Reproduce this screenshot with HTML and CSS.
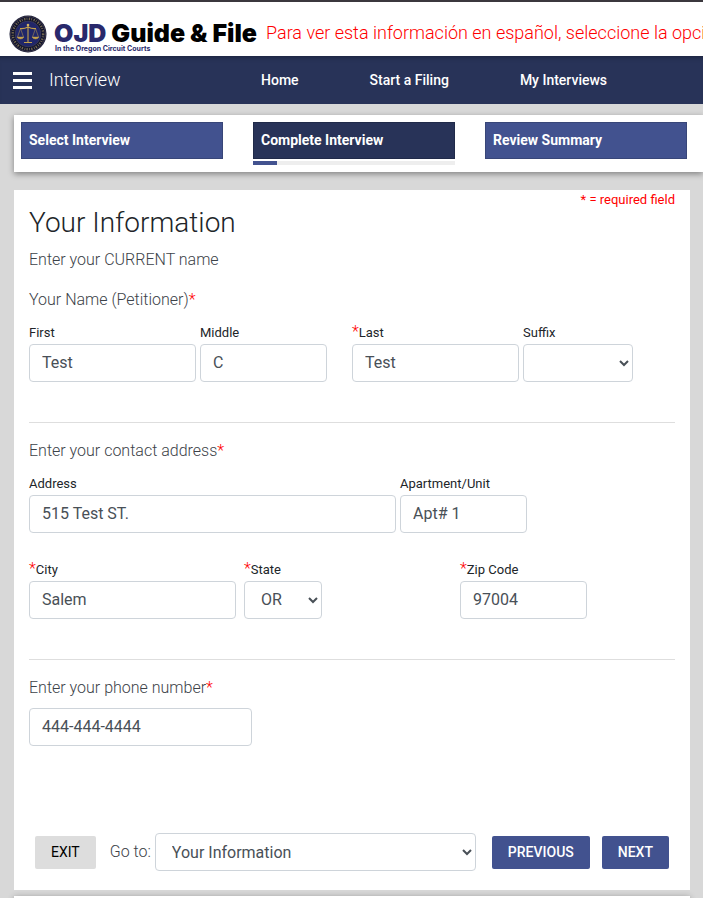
FILE: index.html
```html
<!DOCTYPE html>
<html lang="en">
<head>
<meta charset="utf-8">
<meta name="viewport" content="width=device-width, initial-scale=1">
<title>OJD Guide &amp; File</title>
<link rel="stylesheet" href="styles.css">
</head>
<body>
<header class="brand-bar">
  <svg class="seal" viewBox="0 0 38 38" aria-hidden="true">
    <circle cx="19" cy="19" r="18.5" fill="#11142f"/>
    <circle cx="19" cy="19" r="17.5" fill="none" stroke="#5a5360" stroke-width=".6"/>
    <circle cx="19" cy="19" r="15.2" fill="none" stroke="#75694f" stroke-width="2.4" stroke-dasharray="1.3 1.2 .8 1.5"/>
    <circle cx="19" cy="19" r="12.9" fill="#202669" stroke="#5d5557" stroke-width=".4"/>
    <g fill="none" stroke="#c4a14d" stroke-width="1.1">
      <path d="M19 9v18M11 13.500q4 .5 8-1.500q4 2 8 1.500M15 27.500h8"/>
      <path d="M11.500 13.500l-3 8.500M11.500 13.500l3 8.500M26.500 13.500l-3 8.500M26.500 13.500l3 8.500" stroke-width=".5"/>
      <path d="M8 22h7q-1 2-3.500 2T8 22zM23 22h7q-1 2-3.500 2T23 22z" fill="#c4a14d" stroke-width=".4"/>
    </g>
    <circle cx="19" cy="10" r="1.300" fill="#d4b461"/>
  </svg>
  <div class="wordmark">
    <div class="wordmark-name"><span class="wordmark-org">OJD</span> Guide &amp; File</div>
    <div class="wordmark-tag">In the Oregon Circuit Courts</div>
  </div>
  <p class="notice">Para ver esta información en español, seleccione la opción</p>
</header>
<nav class="nav">
  <button class="menu" type="button" aria-label="Menu"><svg viewBox="0 0 19 17" width="19" height="17"><path fill="#fff" d="M0 0h19v3H0zM0 7h19v3H0zM0 14h19v3H0z"/></svg></button>
  <span class="nav-title">Interview</span>
  <div class="nav-links">
    <a href="#">Home</a>
    <a href="#">Start a Filing</a>
    <a href="#">My Interviews</a>
  </div>
</nav>
<div class="steps">
  <div class="step"><a class="step-link" href="#">Select Interview</a></div>
  <div class="step"><a class="step-link current" href="#">Complete Interview</a><div class="progress"><div class="progress-fill"></div></div></div>
  <div class="step"><a class="step-link" href="#">Review Summary</a></div>
</div>
<main>
<form class="card">
  <p class="required-note">* = required field</p>
  <h1>Your Information</h1>
  <p class="prompt intro">Enter your CURRENT name</p>
  <section class="block">
    <p class="prompt">Your Name (Petitioner)<span class="star">*</span></p>
    <div class="fields">
      <div class="field w-name"><label for="first">First</label><input id="first" type="text" value="Test"></div>
      <div class="field w-short"><label for="middle">Middle</label><input id="middle" type="text" value="C"></div>
      <div class="field w-name gap-large"><label for="last"><span class="star">*</span>Last</label><input id="last" type="text" value="Test"></div>
      <div class="field w-suffix"><label for="suffix">Suffix</label><select id="suffix"><option></option></select></div>
    </div>
  </section>
  <section class="block">
    <p class="prompt">Enter your contact address<span class="star">*</span></p>
    <div class="fields">
      <div class="field w-address"><label for="address">Address</label><input id="address" type="text" value="515 Test ST."></div>
      <div class="field w-short"><label for="unit">Apartment/Unit</label><input id="unit" type="text" value="Apt# 1"></div>
    </div>
    <div class="fields">
      <div class="field w-city"><label for="city"><span class="star">*</span>City</label><input id="city" type="text" value="Salem"></div>
      <div class="field w-state"><label for="state"><span class="star">*</span>State</label><select id="state"><option>OR</option></select></div>
      <div class="field w-short"><label for="zip"><span class="star">*</span>Zip Code</label><input id="zip" type="text" value="97004"></div>
    </div>
  </section>
  <section class="block">
    <label class="prompt" for="phone">Enter your phone number<span class="star">*</span></label>
    <div class="fields"><div class="field w-phone"><input id="phone" type="tel" value="444-444-4444"></div></div>
  </section>
  <footer class="actions">
    <button class="btn btn-plain" type="button">EXIT</button>
    <label class="goto-label" for="goto">Go to:</label>
    <select class="goto" id="goto"><option>Your Information</option></select>
    <button class="btn" type="button">PREVIOUS</button>
    <button class="btn" type="button">NEXT</button>
  </footer>
</form>
<div class="card-next"></div>
</main>
</body>
</html>
```
FILE: styles.css
```css
* { box-sizing: border-box; }

body {
  margin: 0;
  background: #d8d8d8;
  color: #212529;
  font: 300 16px/24px Roboto, "Liberation Sans", sans-serif;
  overflow: hidden;
}

p, h1 { margin: 0; }
a { color: inherit; text-decoration: none; }

.brand-bar {
  display: flex;
  align-items: flex-start;
  height: 56px;
  padding: 13px 0 0 9px;
  border-top: 2px solid #3b383e;
  background: #fff;
  white-space: nowrap;
  overflow: hidden;
}

.seal { flex: none; width: 38px; height: 38px; }

.wordmark {
  flex: none;
  width: 211px;
  padding: 7px 0 0 7px;
}

.wordmark-name {
  color: #000;
  font: 900 25px/23px Inter, "Liberation Sans", sans-serif;
}

.wordmark-org { color: #29296c; }
.wordmark-tag { padding-left: 1px; color: #29296c; font: 700 7px/8px Inter, "Liberation Sans", sans-serif; }

.notice { padding: 6px 0 0 8px; color: #f00; font-size: 18px; font-weight: 300; }

.nav {
  display: flex;
  align-items: center;
  height: 48px;
  padding-left: 13px;
  background: #283358;
  box-shadow: inset 0 5px 5px -4px rgba(0, 0, 0, .35);
  color: #fff;
}

.menu { display: flex; padding: 0; border: 0; background: none; }
.nav-title { width: 212px; margin-left: 17px; font-size: 18px; }
.nav-links { display: flex; gap: 71px; font-size: 14px; font-weight: 500; }

.steps {
  display: flex;
  gap: 30px;
  margin: 11px 0 18px 14px;
  padding: 7px 16px 7px 7px;
  background: #fff;
  box-shadow: 0 2px 6px rgba(0, 0, 0, .4);
}

.step { flex: 1; }

.step-link {
  display: block;
  padding: 5px 7px;
  border: 1px solid #384678;
  background: #42528f;
  color: #fff;
  font-size: 14px;
  font-weight: 700;
  line-height: 25px;
}

.step-link.current { border-color: #202a49; background: #283358; }
.progress { height: 4px; margin: 2px 0 0; background: #eee; }
.progress-fill { width: 12%; height: 100%; background: #42528f; }

main { margin: 0 13px 0 14px; }

.card {
  padding: 0 15px 19px;
  background: #fff;
}

.required-note {
  color: #f00;
  font-size: 13px;
  font-weight: 400;
  line-height: 20px;
  text-align: right;
}

h1 { font-size: 28px; font-weight: 300; line-height: 26px; }
.prompt { display: block; color: #3c4248; }
.intro { margin: 12px 0 16px; }
.star { color: #f00; font-weight: 300; }

.block + .block { padding-top: 16px; border-top: 1px solid #dedede; }
.block { padding-bottom: 40px; }
.block:last-of-type { padding-bottom: 87px; }

.fields { display: flex; gap: 4px; margin-top: 8px; }
.fields + .fields { gap: 8px; margin-top: 24px; }
.field { min-width: 0; }

.field label {
  display: block;
  height: 24px;
  font-size: 13px;
  font-weight: 400;
  line-height: 26px;
}

.field .star { font-size: 16px; line-height: 16px; }

input, select {
  display: block;
  width: 100%;
  height: 38px;
  padding: 5px 12px 7px;
  border: 1px solid #ced4da;
  border-radius: 4px;
  background: #fff;
  color: #495057;
  font: 400 16px/24px Roboto, "Liberation Sans", sans-serif;
}

.w-name { width: 167px; }
.w-short { width: 127px; }
.w-suffix { width: 110px; }
.w-address { width: 367px; }
.w-city { width: 207px; }
.w-state { width: 208px; }
.w-state select { width: 78px; }
.w-phone { width: 223px; }
.gap-large { margin-left: 21px; }

.actions {
  display: flex;
  align-items: center;
  padding: 0 6px;
}

.btn {
  flex: none;
  height: 33px;
  margin-left: 12px;
  padding: 0 16px;
  border: 0;
  border-radius: 2px;
  background: #42528f;
  color: #fff;
  font: 500 14px/33px Roboto, "Liberation Sans", sans-serif;
}

.btn-plain { margin: 0; background: #ddd; color: #000; font-weight: 400; }
.goto-label { margin: 0 4px 0 14px; color: #3c4248; }
.goto { flex: 1; width: auto; min-width: 0; margin-right: 4px; padding: 6px 12px; }

.card-next { height: 20px; margin-top: 6px; background: #fff; box-shadow: 0 1px 6px rgba(0, 0, 0, .3); }
```
